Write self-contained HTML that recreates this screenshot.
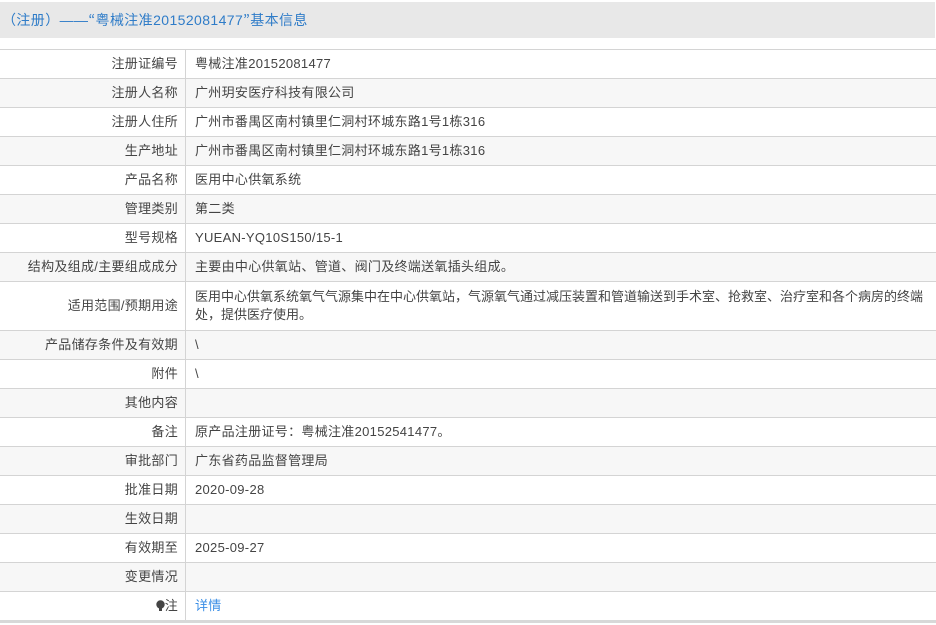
<!DOCTYPE html>
<html><head><meta charset="utf-8"><style>
body{margin:0;width:936px;height:625px;background:#fff;font-family:"Liberation Sans","Noto Sans CJK SC",sans-serif;font-size:13px;color:#444;overflow:hidden}
.hd{position:absolute;left:0;top:2px;width:935px;height:36px;background:#e8e8e8;color:#2f7cc8;line-height:36px;font-size:14px;text-indent:2px;letter-spacing:0.4px}
.hd .c{font-family:"Noto Sans CJK JP",sans-serif}
table{position:absolute;left:0;top:49px;width:936px;border-collapse:collapse}
td{border-top:1px solid #d4d4d4;height:28px;padding:0;line-height:18px;letter-spacing:0.3px}
tr:nth-child(even) td{background:#f7f7f7}
td.l{width:178px;text-align:right;padding-right:7px;border-right:1px solid #d4d4d4}
td.v{padding-left:9px;padding-right:8px}
tr.tall td{height:48px}
tr:last-child td{border-bottom:3px solid #d8d8d8}
a{color:#3a8ee6;text-decoration:none}
</style></head><body>
<div class="hd"><span class="c">（</span>注册<span class="c">）</span>——<span class="c">“</span>粤械注准20152081477<span class="c">”</span>基本信息</div>
<table>
<tr><td class="l">注册证编号</td><td class="v">粤械注准20152081477</td></tr>
<tr><td class="l">注册人名称</td><td class="v">广州玥安医疗科技有限公司</td></tr>
<tr><td class="l">注册人住所</td><td class="v">广州市番禺区南村镇里仁洞村环城东路1号1栋316</td></tr>
<tr><td class="l">生产地址</td><td class="v">广州市番禺区南村镇里仁洞村环城东路1号1栋316</td></tr>
<tr><td class="l">产品名称</td><td class="v">医用中心供氧系统</td></tr>
<tr><td class="l">管理类别</td><td class="v">第二类</td></tr>
<tr><td class="l">型号规格</td><td class="v">YUEAN-YQ10S150/15-1</td></tr>
<tr><td class="l">结构及组成/主要组成成分</td><td class="v">主要由中心供氧站、管道、阀门及终端送氧插头组成。</td></tr>
<tr class="tall"><td class="l">适用范围/预期用途</td><td class="v" style="letter-spacing:0">医用中心供氧系统氧气气源集中在中心供氧站，气源氧气通过减压装置和管道输送到手术室、抢救室、治疗室和各个病房的终端处，提供医疗使用。</td></tr>
<tr><td class="l">产品储存条件及有效期</td><td class="v">\</td></tr>
<tr><td class="l">附件</td><td class="v">\</td></tr>
<tr><td class="l">其他内容</td><td class="v"></td></tr>
<tr><td class="l">备注</td><td class="v">原产品注册证号：粤械注准20152541477。</td></tr>
<tr><td class="l">审批部门</td><td class="v">广东省药品监督管理局</td></tr>
<tr><td class="l">批准日期</td><td class="v">2020-09-28</td></tr>
<tr><td class="l">生效日期</td><td class="v"></td></tr>
<tr><td class="l">有效期至</td><td class="v">2025-09-27</td></tr>
<tr><td class="l">变更情况</td><td class="v"></td></tr>
<tr><td class="l"><svg width="9" height="11" viewBox="0 0 9 11" style="vertical-align:-1px"><circle cx="4.5" cy="4.5" r="4.2" fill="#444"/><rect x="3" y="8" width="3" height="3" fill="#444"/></svg>注</td><td class="v"><a>详情</a></td></tr>
</table>
</body></html>
